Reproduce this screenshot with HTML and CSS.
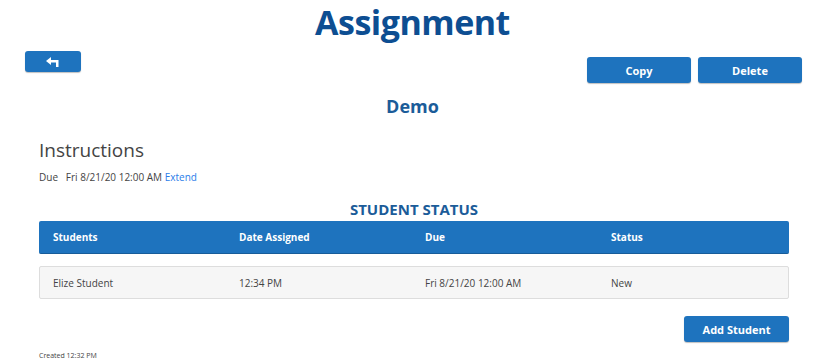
FILE: index.html
```html
<!DOCTYPE html>
<html lang="en">
<head>
    <meta charset="UTF-8">
    <title>Assignment</title>
    <link rel="stylesheet" href="styles.css">
</head>
<body>
    <h1 class="page-title">Assignment</h1>

    <div class="toolbar">
        <button class="btn btn-back" type="button" aria-label="Back">
            <svg width="14" height="10" viewBox="0 0 14 10">
                <path d="M5 0 L0 4 L5 8 L5 5.5 L10 5.5 L10 10 L12.5 10 L12.5 3 L5 3 Z" fill="#fff"/>
            </svg>
        </button>
        <div class="actions">
            <button class="btn btn-action" type="button">Copy</button>
            <button class="btn btn-action" type="button">Delete</button>
        </div>
    </div>

    <h2 class="assignment-name">Demo</h2>

    <div class="content">
        <h3 class="section-title">Instructions</h3>
        <p class="due">Due&nbsp;&nbsp; Fri 8/21/20 12:00 AM <a href="#" class="extend">Extend</a></p>

        <h4 class="status-title">STUDENT STATUS</h4>
        <div class="status-table">
            <div class="status-row status-head">
                <span>Students</span>
                <span>Date Assigned</span>
                <span>Due</span>
                <span>Status</span>
            </div>
            <div class="status-row status-item">
                <span>Elize Student</span>
                <span>12:34 PM</span>
                <span>Fri 8/21/20 12:00 AM</span>
                <span>New</span>
            </div>
        </div>

        <div class="add-row">
            <button class="btn btn-action" type="button">Add Student</button>
        </div>

        <p class="created">Created 12:32 PM</p>
    </div>
</body>
</html>
```

FILE: styles.css
```css
body {
    margin: 0;
    font-family: 'Open Sans', 'Noto Sans', sans-serif;
    color: #444;
    background: #fff;
}

.page-title {
    margin: 0;
    text-align: center;
    font-size: 34px;
    line-height: 45px;
    font-weight: bold;
    color: #0d4e92;
    letter-spacing: -0.5px;
}

.toolbar {
    display: flex;
    justify-content: space-between;
    padding: 6px 23px 0 25px;
}

.btn {
    background-color: #1e73be;
    color: #fff;
    border: none;
    border-radius: 3px;
    font-family: inherit;
    font-weight: bold;
    cursor: pointer;
    box-shadow: 0 1px 1px rgba(0,0,0,.25);
}

.btn-back {
    width: 56px;
    height: 21px;
    display: flex;
    align-items: center;
    justify-content: center;
    padding: 0;
}

.actions {
    display: flex;
    gap: 7px;
    padding-top: 6px;
}

.btn-action {
    width: 104px;
    height: 26px;
    font-size: 11px;
    padding: 0;
}

.add-row .btn-action {
    width: 105px;
}

.assignment-name {
    margin: 11px 0 0;
    text-align: center;
    font-size: 18px;
    line-height: 24px;
    color: #1b5c99;
}

.content {
    padding: 0 36px 0 39px;
}

.section-title {
    margin: 18px 0 0;
    font-size: 19px;
    line-height: 28px;
    font-weight: normal;
    color: #444;
}

.due {
    margin: 6px 0 0;
    font-size: 10px;
    line-height: 14px;
}

.extend {
    color: #2b7de9;
    text-decoration: none;
}

.status-title {
    margin: 15px 0 2px;
    text-align: center;
    font-size: 15px;
    line-height: 20px;
    color: #1b5c99;
}

.status-table {
    display: flex;
    flex-direction: column;
    gap: 12px;
}

.status-row {
    display: grid;
    grid-template-columns: repeat(4, 186px);
    align-items: center;
    height: 33px;
    padding: 0 0 0 14px;
    border-radius: 2px;
    font-size: 10px;
}

.status-head {
    background-color: #1e73be;
    color: #fff;
    font-weight: bold;
    border-bottom: 1px solid #175c99;
    box-sizing: border-box;
}

.status-item {
    background-color: #f6f6f6;
    border: 1px solid #ddd;
    box-sizing: border-box;
    padding-left: 13px;
}

.add-row {
    display: flex;
    justify-content: flex-end;
    margin-top: 17px;
}

.created {
    margin: 9px 0 0;
    font-size: 7px;
    line-height: 10px;
}
```
